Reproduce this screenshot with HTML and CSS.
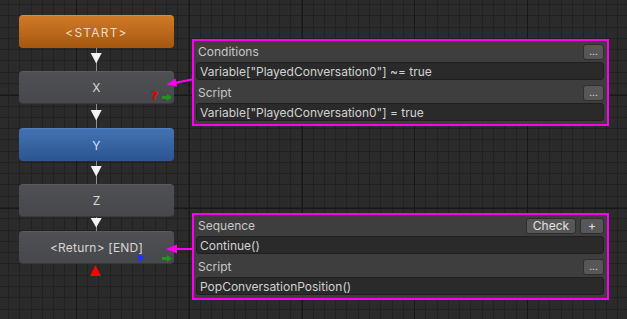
FILE: index.html
```html
<!DOCTYPE html>
<html>
<head>
<meta charset="utf-8">
<link rel="stylesheet" href="styles.css">
</head>
<body>
<div class="canvas">
  <div class="node node-start" style="top:15px">&lt;START&gt;</div>
  <div class="node node-gray" style="top:71px">X
    <span class="badge-q">?</span>
    <svg class="badge-go" width="10" height="7" viewBox="0 0 10 7"><rect x="0" y="2" width="5" height="3"/><polygon points="5,0 10,3.5 5,7"/></svg>
  </div>
  <div class="node node-blue" style="top:128px">Y</div>
  <div class="node node-gray" style="top:184px">Z</div>
  <div class="node node-gray node-end" style="top:231px">&lt;Return&gt; [END]
    <svg class="badge-play" width="7" height="8" viewBox="0 0 7 8"><polygon points="0,0 7,4 0,8"/></svg>
    <svg class="badge-go" width="10" height="7" viewBox="0 0 10 7"><rect x="0" y="2" width="5" height="3"/><polygon points="5,0 10,3.5 5,7"/></svg>
  </div>

  <div class="panel" style="top:39px">
    <div class="panel-head"><span class="label">Conditions</span><span class="btn btn-dots">...</span></div>
    <div class="field">Variable["PlayedConversation0"] ~= true</div>
    <div class="panel-head"><span class="label">Script</span><span class="btn btn-dots">...</span></div>
    <div class="field">Variable["PlayedConversation0"] = true</div>
  </div>

  <div class="panel" style="top:213px">
    <div class="panel-head"><span class="label">Sequence</span><span class="btn btn-check">Check</span><span class="btn btn-plus">+</span></div>
    <div class="field">Continue()</div>
    <div class="panel-head"><span class="label">Script</span><span class="btn btn-dots">...</span></div>
    <div class="field">PopConversationPosition()</div>
  </div>

  <svg class="links" width="627" height="319" viewBox="0 0 627 319">
    <g stroke="#8c8c8c" stroke-width="1">
      <line x1="96.5" y1="48" x2="96.5" y2="71"/>
      <line x1="96.5" y1="104" x2="96.5" y2="128"/>
      <line x1="96.5" y1="161" x2="96.5" y2="184"/>
      <line x1="96.5" y1="217" x2="96.5" y2="231"/>
    </g>
    <g fill="#f4f4f4">
      <polygon points="90.7,53 101.7,53 96.2,63.5"/>
      <polygon points="90.7,110 101.7,110 96.2,120.5"/>
      <polygon points="90.7,166 101.7,166 96.2,176.5"/>
      <polygon points="90.7,218 101.7,218 96.2,227.5"/>
    </g>
    <polygon fill="#ff0000" points="90,276 101,276 95.5,265"/>
    <g stroke="#ff00ee" stroke-width="2" fill="none">
      <line x1="193" y1="79.3" x2="172" y2="83.5"/>
      <line x1="193" y1="249" x2="172" y2="249"/>
    </g>
    <g fill="#ff00ee">
      <polygon points="166.5,84.5 177.1,86.8 175.5,78.5"/>
      <polygon points="166,249 177,244.5 177,253.5"/>
    </g>
  </svg>
</div>
</body>
</html>
```
FILE: styles.css
```css
html, body {
  margin: 0;
  padding: 0;
}
body {
  width: 627px;
  height: 319px;
  overflow: hidden;
  font-family: Inter, "Noto Sans", sans-serif;
}
.canvas {
  position: relative;
  width: 627px;
  height: 319px;
  background-color: #2b2b2b;
  background-image:
    repeating-linear-gradient(to right, transparent 0 76px, #171717 76px 77px, transparent 77px 112.8px),
    repeating-linear-gradient(to bottom, transparent 0 95px, #171717 95px 96px, transparent 96px 112.8px),
    repeating-linear-gradient(to right, transparent 0 8px, #212121 8px 9px, transparent 9px 11.28px),
    repeating-linear-gradient(to bottom, transparent 0 4px, #212121 4px 5px, transparent 5px 11.28px);
}
.node {
  position: absolute;
  left: 19px;
  width: 155px;
  height: 33px;
  box-sizing: border-box;
  border-radius: 4px;
  display: flex;
  align-items: center;
  justify-content: center;
  font-size: 12px;
  color: #d6d6d6;
  letter-spacing: 0.2px;
}
.node-gray {
  background: linear-gradient(#4f5054, #47484c);
  border-top: 1px solid #5a5b5f;
  border-bottom: 1px solid #3a3a3d;
}
.node-start {
  background: linear-gradient(#d07a28, #a5570f);
  border-top: 1px solid #d98a3d;
  color: #ecdcc8;
  letter-spacing: 1.2px;
}
.node-blue {
  background: linear-gradient(#4372b3, #2c5591);
  border-top: 1px solid #4f7dbd;
  color: #d8e2f0;
}
.badge-q {
  position: absolute;
  left: 132px;
  top: 17px;
  font-size: 12px;
  font-weight: 700;
  color: #e60000;
  letter-spacing: 0;
  font-family: "DejaVu Sans", sans-serif;
}
.badge-go {
  position: absolute;
  left: 143px;
  top: 22px;
  fill: #1d961d;
}
.node-end .badge-go {
  top: 23px;
}
.badge-play {
  position: absolute;
  left: 119px;
  top: 22px;
  fill: #1e32ff;
}
.panel {
  position: absolute;
  left: 192px;
  width: 417px;
  height: 87px;
  box-sizing: border-box;
  border: 2px solid #ff00ee;
  background: #3e3e3e;
  padding: 0 3px 0 2px;
  display: flex;
  flex-direction: column;
}
.panel-head {
  height: 21px;
  display: flex;
  align-items: center;
  gap: 4px;
}
.label {
  flex: 1;
  padding-left: 2px;
  font-size: 12px;
  color: #c8c8c8;
}
.field {
  height: 18px;
  box-sizing: border-box;
  margin-bottom: 2px;
  background: #2a2a2a;
  border: 1px solid #1f1f1f;
  border-radius: 3px;
  padding-left: 3px;
  display: flex;
  align-items: center;
  font-size: 12px;
  color: #d2d2d2;
}
.btn {
  height: 16px;
  box-sizing: border-box;
  background: #575757;
  border: 1px solid #2e2e2e;
  border-radius: 3px;
  display: flex;
  align-items: center;
  justify-content: center;
  font-size: 12px;
  color: #e2e2e2;
}
.btn-dots {
  width: 21px;
  font-size: 10px;
  align-items: flex-end;
  padding-bottom: 3px;
  line-height: 1;
}
.btn-check {
  width: 50px;
}
.btn-plus {
  width: 24px;
}
.links {
  position: absolute;
  left: 0;
  top: 0;
  pointer-events: none;
}
```
